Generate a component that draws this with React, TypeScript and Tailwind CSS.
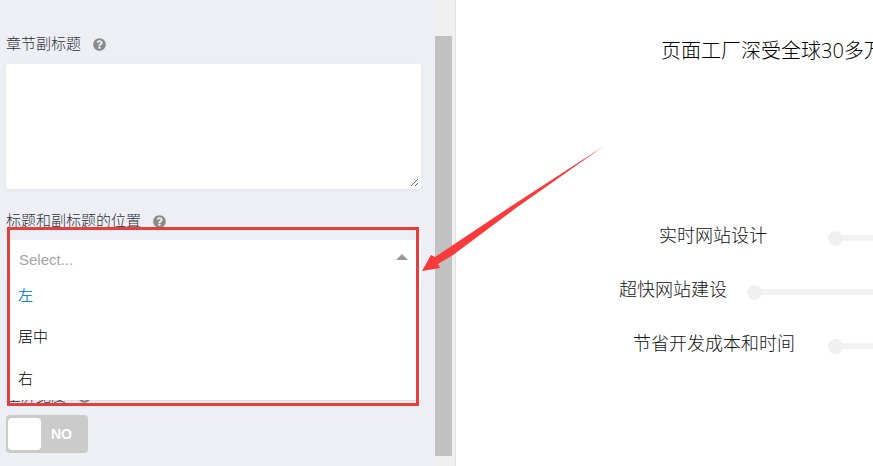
import { useState } from "react";
import type { ReactNode } from "react";
import { FaQuestionCircle } from "react-icons/fa";

const POSITIONS = [
  { value: "left", label: "左" },
  { value: "center", label: "居中" },
  { value: "right", label: "右" },
];

function FieldLabel({ htmlFor, children }: { htmlFor: string; children: ReactNode }) {
  return (
    <div className="flex h-5 items-center gap-3 text-[#2f3237]">
      <label htmlFor={htmlFor} className="text-[15px] leading-5 font-light">
        {children}
      </label>
      <FaQuestionCircle className="size-[13px] text-[#8a8a8a]" />
    </div>
  );
}

function PositionSelect() {
  const [value, setValue] = useState("");

  return (
    <div className="relative mt-[9px]">
      <select
        id="position"
        value={value}
        onChange={(e) => setValue(e.target.value)}
        className="block h-10 w-full appearance-none rounded-t-[3px] bg-white px-[13px] text-[15px] text-[#a5a5a5] outline-none"
      >
        <option value="">Select...</option>
        {POSITIONS.map((p) => (
          <option key={p.value} value={p.value}>
            {p.label}
          </option>
        ))}
      </select>
      <svg viewBox="0 0 12 6" className="pointer-events-none absolute top-[14px] right-[13px] h-[6px] w-3 fill-[#999]">
        <path d="M6 0 12 6H0Z" />
      </svg>

      {/* Open menu */}
      <ul className="absolute inset-x-0 top-full z-10 bg-white shadow-[0_1px_2px_rgba(0,0,0,0.08)]">
        {POSITIONS.map((p, i) => (
          <li key={p.value} className={i === 0 ? "h-8 mb-1" : "h-[42px]"}>
            <button
              type="button"
              onClick={() => setValue(p.value)}
              className={`flex h-full w-full items-center px-3 text-[15px] leading-5 ${
                i === 0 ? "font-normal text-[#1a86dd]" : "font-light text-black"
              }`}
            >
              {p.label}
            </button>
          </li>
        ))}
      </ul>
    </div>
  );
}

function Toggle() {
  const [on, setOn] = useState(false);

  return (
    <button
      id="full-width"
      type="button"
      role="switch"
      aria-checked={on}
      onClick={() => setOn(!on)}
      className="mt-[9px] flex h-[38px] w-[82px] items-center rounded-[4px] bg-[#cbcbcb] p-[2px]"
    >
      <span className="h-8 w-[33px] rounded-[4px] bg-white" />
      <span className="ml-[10px] text-sm font-bold text-white">{on ? "YES" : "NO"}</span>
    </button>
  );
}

function Settings() {
  return (
    <aside className="relative flex w-[456px] shrink-0 border-r border-[#e2e2e2] bg-[#eeeff4]">
      <div className="flex-1 pt-[34px] pr-[14px] pl-[6px]">
        <FieldLabel htmlFor="subtitle">章节副标题</FieldLabel>
        <textarea
          id="subtitle"
          className="mt-[10px] block h-[125px] w-full resize rounded-[3px] border-2 border-white bg-white p-3 text-[15px] shadow-[0_1px_4px_rgba(0,0,0,0.05)] outline-none"
        />
        <div className="mt-[22px]">
          <FieldLabel htmlFor="position">标题和副标题的位置</FieldLabel>
          <PositionSelect />
        </div>
        <div className="mt-[106px]">
          <FieldLabel htmlFor="full-width">全屏宽度</FieldLabel>
          <Toggle />
        </div>
      </div>

      {/* Scrollbar */}
      <div className="flex w-5 flex-col bg-[#f0f0f0] pt-9 pb-[10px]">
        <div className="w-[17px] flex-1 bg-[#c1c1c1]" />
      </div>

      {/* Highlight frame */}
      <div className="pointer-events-none absolute top-[227px] left-[7px] z-20 h-[179px] w-[412px] border-3 border-[#e53e3e]" />
    </aside>
  );
}

function Bar({ id, label, className }: { id: string; label: string; className: string }) {
  return (
    <div className={`flex h-[26px] items-center ${className}`}>
      <label htmlFor={id} className="shrink-0 text-lg leading-6 font-light whitespace-nowrap">
        {label}
      </label>
      <input
        id={id}
        type="range"
        defaultValue={0}
        className="mt-1 h-[6px] min-w-0 flex-1 appearance-none rounded-l-full bg-[#f2f2f2] outline-none [&::-webkit-slider-thumb]:size-[15px] [&::-webkit-slider-thumb]:appearance-none [&::-webkit-slider-thumb]:rounded-full [&::-webkit-slider-thumb]:bg-[#f0f0f0]"
      />
    </div>
  );
}

function Preview() {
  return (
    <main className="min-w-0 flex-1 overflow-hidden bg-white pt-9 text-[#111]">
      <h2 className="pl-[205px] font-['Open_Sans','Noto_Sans_CJK_SC',sans-serif] text-xl leading-[30px] font-light whitespace-nowrap text-black">
        页面工厂深受全球30多万
      </h2>
      <div className="mt-[157px] flex flex-col gap-7">
        <Bar id="design" label="实时网站设计" className="gap-[61px] pl-[203px]" />
        <Bar id="build" label="超快网站建设" className="gap-5 pl-[163px]" />
        <Bar id="cost" label="节省开发成本和时间" className="gap-[33px] pl-[177px]" />
      </div>
    </main>
  );
}

export default function App() {
  return (
    <div className="relative flex min-h-screen overflow-hidden bg-white font-['Liberation_Sans','Noto_Sans_CJK_SC',sans-serif]">
      <Settings />
      <Preview />
      {/* Arrow pointing at the menu */}
      <svg
        viewBox="0 0 184 126"
        className="pointer-events-none absolute top-[146px] left-[421px] z-30 h-[126px] w-[184px] fill-[#fa3a3a]"
      >
        <path d="M1 125 10 109 14 111 32 99 95 57 183 0 95 62 32 109 17 118 19 122Z" />
      </svg>
    </div>
  );
}
